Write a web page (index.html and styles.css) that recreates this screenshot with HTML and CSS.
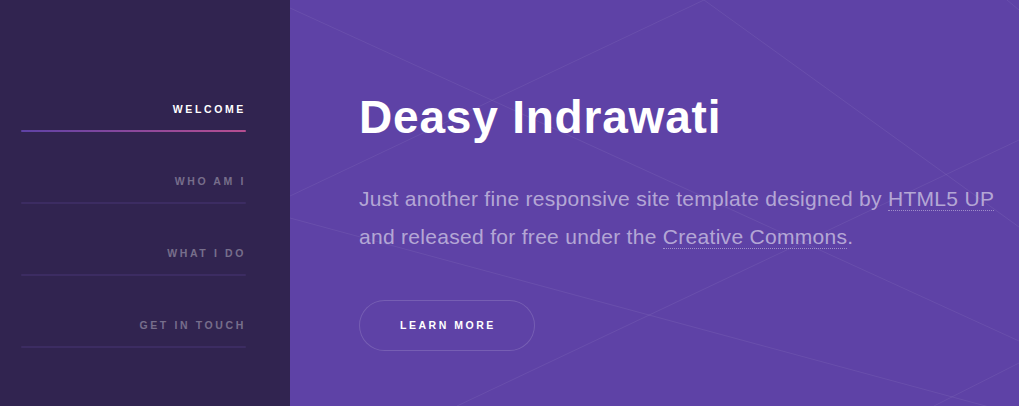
FILE: index.html
```html
<!DOCTYPE html>
<html lang="en">
<head>
<meta charset="utf-8">
<title>Deasy Indrawati</title>
<link rel="stylesheet" href="styles.css">
</head>
<body>
<div class="page">
  <aside class="sidebar">
    <nav class="nav">
      <a class="nav-link active" href="#intro">Welcome</a>
      <a class="nav-link" href="#one">Who am I</a>
      <a class="nav-link" href="#two">What I do</a>
      <a class="nav-link" href="#three">Get in touch</a>
    </nav>
  </aside>
  <main class="main">
    <svg class="bg-lines" viewBox="0 0 729 406" preserveAspectRatio="none" aria-hidden="true">
      <line x1="0" y1="8" x2="729" y2="341"/>
      <line x1="0" y1="196" x2="414" y2="0"/>
      <line x1="414" y1="0" x2="729" y2="227"/>
      <line x1="729" y1="140" x2="167" y2="406"/>
      <line x1="729" y1="363" x2="644" y2="406"/>
      <line x1="0" y1="218" x2="729" y2="415"/>
      <line x1="717" y1="0" x2="729" y2="10"/>
    </svg>
    <section class="intro">
      <h1 class="title">Deasy Indrawati</h1>
      <p class="lead">Just another fine responsive site template designed by <a class="text-link" href="#">HTML5 UP</a> and released for free under the <a class="text-link" href="#">Creative Commons</a>.</p>
      <a class="button" href="#one">Learn more</a>
    </section>
  </main>
</div>
</body>
</html>
```
FILE: styles.css
```css
html, body {
  margin: 0;
  padding: 0;
  height: 100%;
}
body {
  background: #5e42a6;
  font-family: "Liberation Sans", Arial, Helvetica, sans-serif;
  overflow: hidden;
}
.page {
  display: flex;
  min-height: 406px;
  height: 100vh;
}
.sidebar {
  flex: 0 0 290px;
  background: #312450;
  box-sizing: border-box;
  padding: 86px 44px 0 21px;
}
.nav {
  display: flex;
  flex-direction: column;
  gap: 26px;
}
.nav-link {
  position: relative;
  display: block;
  padding: 14px 0;
  line-height: 18px;
  font-size: 10.5px;
  font-weight: bold;
  letter-spacing: 0.25em;
  text-transform: uppercase;
  text-align: right;
  text-decoration: none;
  color: rgba(255, 255, 255, 0.35);
}
.nav-link::after {
  content: "";
  position: absolute;
  left: 0;
  right: 0;
  bottom: 0;
  height: 2px;
  border-radius: 2px;
  background: #3c2c62;
}
.nav-link.active {
  color: #ffffff;
}
.nav-link.active::after {
  background: linear-gradient(to right, #5e42a6, #b74e91);
}
.main {
  position: relative;
  flex: 1;
  background: #5e42a6;
  overflow: hidden;
}
.bg-lines {
  position: absolute;
  inset: 0;
  width: 100%;
  height: 100%;
  stroke: rgba(255, 255, 255, 0.065);
  stroke-width: 1;
}
.intro {
  position: relative;
  padding: 88px 10px 0 69px;
}
.title {
  margin: 0 0 32px;
  font-size: 46px;
  letter-spacing: 0.8px;
  line-height: 1.3;
  font-weight: bold;
  color: #ffffff;
}
.lead {
  margin: 0 0 44px;
  max-width: 645px;
  font-size: 21px;
  letter-spacing: 0.3px;
  line-height: 38px;
  color: rgba(255, 255, 255, 0.55);
}
.text-link {
  color: inherit;
  text-decoration: none;
  border-bottom: 1px dotted rgba(255, 255, 255, 0.4);
}
.button {
  display: inline-block;
  height: 51px;
  line-height: 51px;
  padding: 0 39px 0 41px;
  border-radius: 26px;
  box-shadow: inset 0 0 0 1px rgba(255, 255, 255, 0.15);
  font-size: 10.5px;
  font-weight: bold;
  letter-spacing: 0.24em;
  text-transform: uppercase;
  text-decoration: none;
  color: #ffffff;
}
```
